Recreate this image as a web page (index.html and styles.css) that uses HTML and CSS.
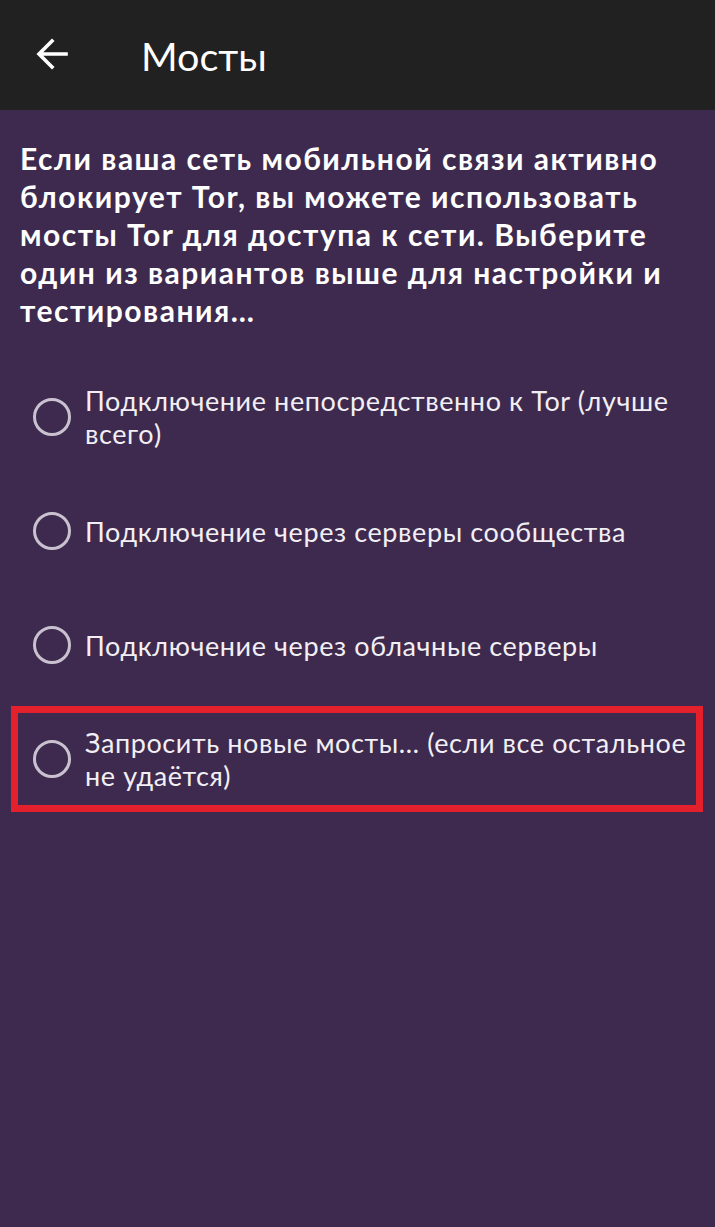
FILE: index.html
```html
<!DOCTYPE html>
<html lang="ru">
<head>
<meta charset="utf-8">
<title>Мосты</title>
<link rel="stylesheet" href="styles.css">
</head>
<body>
<header class="appbar">
  <span class="back">
    <svg viewBox="0 0 32 32" width="32" height="32"><path d="M30 16H4M16 3L3 16l13 13" fill="none" stroke="#fff" stroke-width="3.6" stroke-linecap="square"/></svg>
  </span>
  <h1 class="title">Мосты</h1>
</header>
<main class="content">
  <p class="intro">Если ваша сеть мобильной связи активно блокирует Tor, вы можете использовать мосты Tor для доступа к сети. Выберите один из вариантов выше для настройки и тестирования…</p>
  <ul class="options">
    <li class="option"><span class="radio"></span><span class="label">Подключение непосредственно к Tor (лучше всего)</span></li>
    <li class="option"><span class="radio"></span><span class="label">Подключение через серверы сообщества</span></li>
    <li class="option"><span class="radio"></span><span class="label">Подключение через облачные серверы</span></li>
    <li class="option highlighted"><span class="radio"></span><span class="label">Запросить новые мосты… (если все остальное не удаётся)</span></li>
  </ul>
</main>
</body>
</html>
```
FILE: styles.css
```css
html, body {
  margin: 0;
  padding: 0;
}
body {
  width: 715px;
  min-height: 1227px;
  background: #3e2a4e;
  font-family: Lato, "Open Sans", sans-serif;
  color: #fff;
}
.appbar {
  height: 110px;
  background: #212121;
  display: flex;
  align-items: center;
}
.back {
  display: flex;
  margin-left: 36px;
  margin-top: -2px;
}
.title {
  margin: 0 0 0 73px;
  font-size: 39.5px;
  font-weight: 400;
  color: #fff;
}
.content {
  padding: 29px 20px 0;
}
.intro {
  margin: 0;
  font-size: 30px;
  font-weight: 700;
  letter-spacing: 1.5px;
  line-height: 38px;
  color: #fff;
}
.options {
  list-style: none;
  margin: 31px 0 0;
  padding: 0;
}
.option {
  position: relative;
  height: 114px;
  display: flex;
  align-items: center;
}
.radio {
  flex: none;
  width: 32px;
  height: 32px;
  border: 3px solid #c9c1cf;
  border-radius: 50%;
  margin-left: 13px;
  margin-right: 14px;
}
.label {
  font-size: 27px;
  letter-spacing: 0.6px;
  line-height: 33px;
  color: #f2eff4;
}
.highlighted::after {
  content: "";
  position: absolute;
  top: 4px;
  bottom: 4px;
  left: -9px;
  right: -8px;
  border: 7px solid #e3202b;
  pointer-events: none;
}
```
